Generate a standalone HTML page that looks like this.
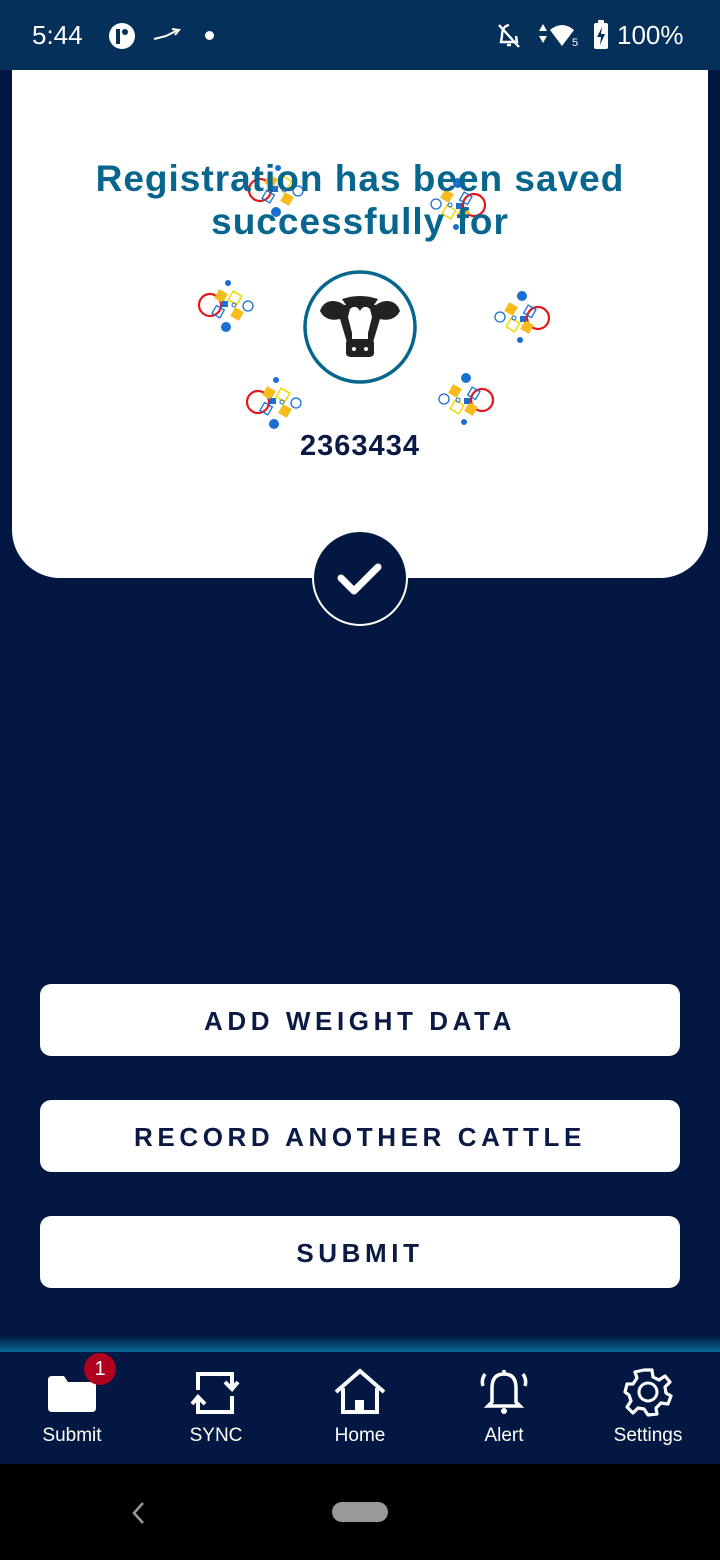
<!DOCTYPE html>
<html><head><meta charset="utf-8"><style>
*{margin:0;padding:0;box-sizing:border-box}
body{width:720px;height:1560px;background:#021842;position:relative;overflow:hidden;font-family:"Liberation Sans",sans-serif}
.sb{position:absolute;left:0;top:0;width:720px;height:70px;background:#053059;color:#fff}
.card{position:absolute;left:12px;top:70px;width:696px;height:508px;background:#fff;border-radius:0 0 48px 48px}
.title{position:absolute;left:0;top:157px;width:720px;text-align:center;color:#06668e;font-weight:bold;font-size:37px;letter-spacing:1px;line-height:43px}
.num{position:absolute;left:0;top:430px;width:720px;text-align:center;color:#0b1a45;font-weight:bold;font-size:29px;letter-spacing:1px}
.btn{position:absolute;left:40px;width:640px;height:72px;background:#fff;border-radius:11px;color:#0b1a45;font-size:26px;font-weight:bold;letter-spacing:4.6px;text-align:center;line-height:74px}
.glow{position:absolute;left:0;top:1336px;width:720px;height:16px;background:linear-gradient(#021842,#0b6a96)}
.nav{position:absolute;left:0;top:1352px;width:720px;height:112px;background:#021842}
.nl{position:absolute;top:1425px;color:#fff;font-size:19px;width:144px;text-align:center}
.sys{position:absolute;left:0;top:1464px;width:720px;height:96px;background:#000}
</style></head><body>
<div class="sb">
<div style="position:absolute;left:32px;top:20px;font-size:26px">5:44</div>
<svg style="position:absolute;left:108px;top:22px" width="30" height="28" viewBox="0 0 30 28"><circle cx="14" cy="14" r="13" fill="#fff"/><rect x="8" y="7" width="4" height="15" fill="#053059"/><circle cx="17" cy="10" r="3" fill="#053059"/></svg>
<svg style="position:absolute;left:152px;top:26px" width="30" height="16"><path d="M2 13 L14 10 L26 4 M20 3 L27 4 L23 9" stroke="#fff" stroke-width="2" fill="none"/></svg>
<div style="position:absolute;left:205px;top:31px;width:9px;height:9px;border-radius:50%;background:#fff"></div>
<svg style="position:absolute;left:496px;top:22px" width="26" height="28"><path d="M13 3 C7 4 6 9 6 14 L5 20 L21 20 L20 14 M11 23 L15 23" stroke="#fff" stroke-width="2.4" fill="none"/><path d="M3 3 L23 25" stroke="#fff" stroke-width="2.4"/></svg>
<svg style="position:absolute;left:536px;top:22px" width="60" height="26"><path d="M3 9 L7 2 L11 9Z M3 14 L11 14 L7 21Z" fill="#fff"/><path d="M14 8 Q26 -2 38 8 L26 24Z" fill="#fff"/><text x="36" y="24" fill="#fff" font-size="11" font-family="Liberation Sans">5</text></svg>
<svg style="position:absolute;left:593px;top:20px" width="16" height="30"><rect x="1" y="3" width="14" height="26" rx="2" fill="#fff"/><rect x="5" y="0" width="6" height="4" fill="#fff"/><path d="M9 7 L4 17 L8 17 L7 25 L12 14 L8 14Z" fill="#053059"/></svg>
<div style="position:absolute;left:617px;top:20px;font-size:26px">100%</div>
</div>
<div class="card"></div>
<svg style="position:absolute;left:0;top:70px" width="720" height="420" viewBox="0 70 720 420">
<defs><g id="cf">
<circle cx="-18" cy="0" r="11" fill="none" stroke="#e2161c" stroke-width="2.2"/>
<rect x="-12" y="-14" width="10" height="10" fill="#f6bc1c" transform="rotate(30 -7 -9)"/>
<rect x="2" y="-12" width="10" height="10" fill="none" stroke="#f6d800" stroke-width="1.5" transform="rotate(30 7 -7)"/>
<rect x="4" y="4" width="10" height="10" fill="#f6bc1c" transform="rotate(30 9 9)"/>
<rect x="-14" y="2" width="9" height="9" fill="none" stroke="#1a6fd0" stroke-width="1.3" transform="rotate(30 -10 6)"/>
<rect x="-6" y="-4" width="6" height="6" fill="#1a6fd0"/>
<circle cx="20" cy="1" r="5" fill="none" stroke="#1a6fd0" stroke-width="1.3"/>
<circle cx="-2" cy="22" r="5" fill="#1a6fd0"/>
<circle cx="0" cy="-22" r="3" fill="#1a6fd0"/>
<circle cx="6" cy="0" r="2" fill="none" stroke="#1a6fd0"/>
</g></defs>
<use href="#cf" x="278" y="190"/>
<use href="#cf" x="228" y="305"/>
<use href="#cf" x="276" y="402"/>
<use href="#cf" x="456" y="205" transform="rotate(180 456 205)"/>
<use href="#cf" x="520" y="318" transform="rotate(180 520 318)"/>
<use href="#cf" x="464" y="400" transform="rotate(180 464 400)"/>
</svg>
<div class="title">Registration has been saved<br>successfully for</div>
<svg style="position:absolute;left:302px;top:269px" width="116" height="116" viewBox="0 0 116 116">
<circle cx="58" cy="58" r="55" fill="#fff" stroke="#06668e" stroke-width="3.5"/>
<path d="M18 42 C22 30 34 30 42 36 L74 36 C82 30 94 30 98 42 C94 50 86 52 78 50 L72 70 L70 76 L46 76 L44 70 L38 50 C30 52 22 50 18 42Z" fill="#222"/>
<path d="M48 40 C52 36 56 38 58 42 C60 38 64 36 68 40 L70 48 L66 64 L66 74 L50 74 L50 64 L46 48Z" fill="#fff"/>
<path d="M44 74 Q44 70 50 70 L66 70 Q72 70 72 74 L72 84 Q72 88 66 88 L50 88 Q44 88 44 84Z" fill="#222"/>
<path d="M40 30 Q58 24 76 30 L72 36 L44 36Z" fill="#222"/>
<circle cx="52" cy="80" r="2" fill="#fff"/><circle cx="64" cy="80" r="2" fill="#fff"/>
</svg>
<div class="num">2363434</div>
<svg style="position:absolute;left:311px;top:529px" width="98" height="98"><circle cx="49" cy="49" r="47" fill="#021842" stroke="#fff" stroke-width="2"/><path d="M30 49 L43 62 L67 38" stroke="#fff" stroke-width="7" fill="none" stroke-linecap="round" stroke-linejoin="round"/></svg>
<div class="btn" style="top:984px">ADD WEIGHT DATA</div>
<div class="btn" style="top:1100px">RECORD ANOTHER CATTLE</div>
<div class="btn" style="top:1216px">SUBMIT</div>
<div class="glow"></div>
<div class="nav"></div>
<svg style="position:absolute;left:46px;top:1370px" width="52" height="44"><path d="M2 10 Q2 6 6 6 L18 6 L22 12 L46 12 Q50 12 50 16 L50 38 Q50 42 46 42 L6 42 Q2 42 2 38Z" fill="#fff"/></svg>
<div style="position:absolute;left:84px;top:1353px;width:32px;height:32px;border-radius:50%;background:#b00020;color:#fff;font-size:20px;text-align:center;line-height:32px">1</div>
<svg style="position:absolute;left:190px;top:1370px" width="50" height="46"><path d="M8 20 L8 4 L42 4 L42 16 M35 12 L42 19 L48 12 M42 26 L42 42 L8 42 L8 30 M2 34 L8 27 L15 34" stroke="#fff" stroke-width="4" fill="none"/></svg>
<svg style="position:absolute;left:333px;top:1368px" width="54" height="48"><path d="M3 24 L27 3 L51 24 M10 20 L10 44 L44 44 L44 20" stroke="#fff" stroke-width="4" fill="none"/><rect x="22" y="32" width="9" height="12" fill="#fff"/></svg>
<svg style="position:absolute;left:478px;top:1366px" width="52" height="52"><path d="M14 36 L14 22 Q14 8 26 8 Q38 8 38 22 L38 36 L42 40 L10 40Z M26 4 L26 8 M7 8 Q3 14 5 20 M45 8 Q49 14 47 20" stroke="#fff" stroke-width="3.5" fill="none"/><circle cx="26" cy="45" r="3" fill="#fff"/></svg>
<svg style="position:absolute;left:622px;top:1366px" width="52" height="52" viewBox="-26 -26 52 52"><path d="M-4 -22 L4 -22 L5 -15 L11 -12 L17 -16 L22 -10 L17 -5 L18 1 L23 4 L20 12 L13 11 L8 16 L9 22 L0 23 L-4 17 L-10 16 L-15 21 L-21 15 L-17 9 L-19 3 L-23 0 L-21 -8 L-15 -8 L-11 -14 L-13 -20Z" stroke="#fff" stroke-width="3.2" fill="none" stroke-linejoin="round"/><circle r="9" fill="none" stroke="#fff" stroke-width="3"/></svg>
<div class="nl" style="left:0">Submit</div>
<div class="nl" style="left:144px">SYNC</div>
<div class="nl" style="left:288px">Home</div>
<div class="nl" style="left:432px">Alert</div>
<div class="nl" style="left:576px">Settings</div>
<div class="sys">
<svg style="position:absolute;left:130px;top:37px" width="16" height="24"><path d="M13 2 L4 12 L13 22" stroke="#999" stroke-width="2.5" fill="none"/></svg>
<div style="position:absolute;left:332px;top:38px;width:56px;height:20px;border-radius:10px;background:#999"></div>
</div>
</body></html>
